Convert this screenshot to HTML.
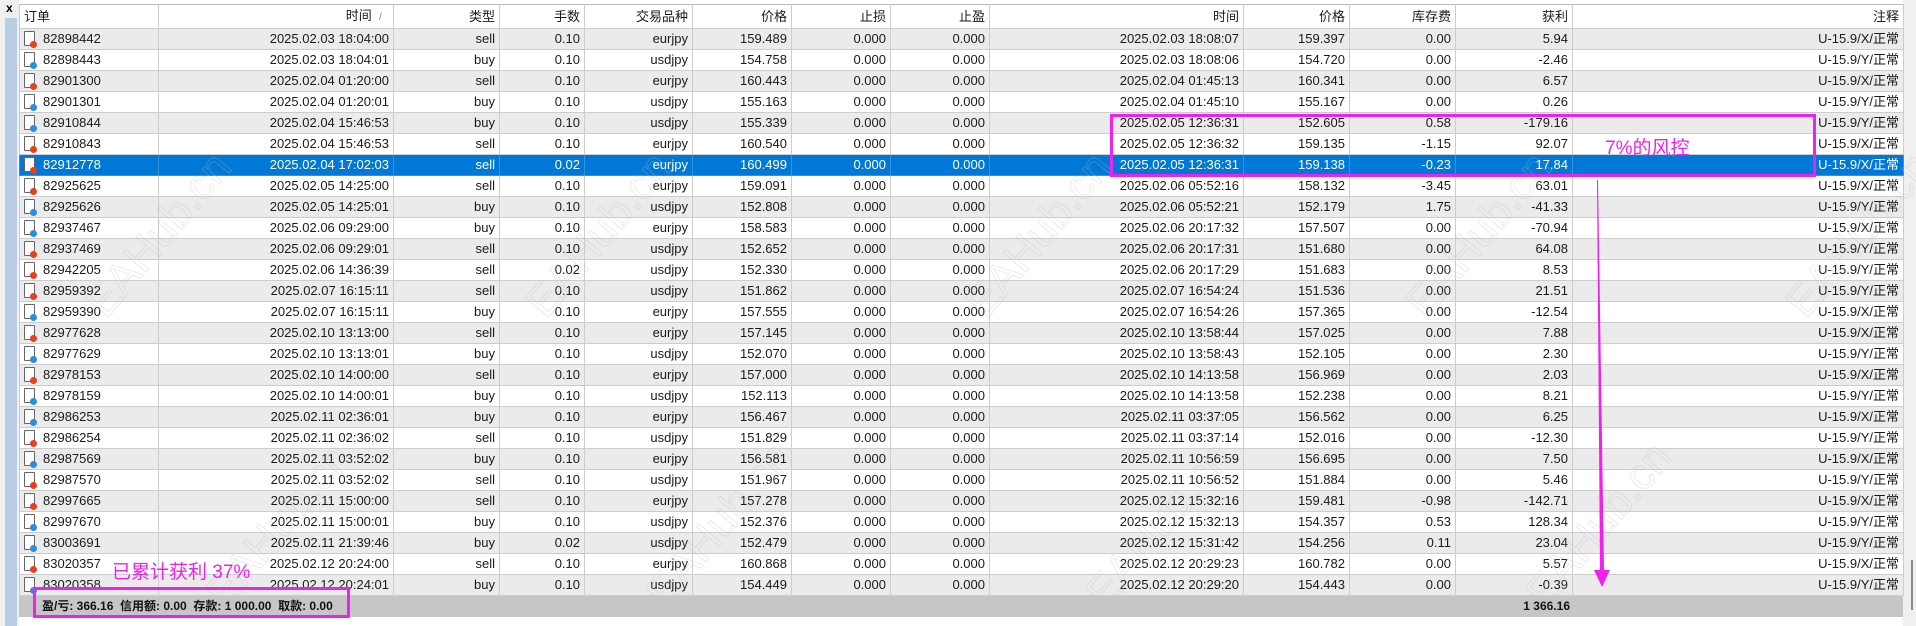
<!DOCTYPE html>
<html><head><meta charset="utf-8"><style>
html,body{margin:0;padding:0;width:1916px;height:626px;overflow:hidden;background:#fff;font-family:"Liberation Sans","Noto Sans CJK SC",sans-serif;}
.strip{position:absolute;left:0;top:0;width:19px;height:626px;background:#f0f0f0;}
.strip i{position:absolute;left:5px;top:18px;width:12px;height:608px;background:#b9cde5;}
.strip b{position:absolute;left:6px;top:1px;font-size:12px;font-weight:bold;color:#000;}
.sb{position:absolute;left:1903px;top:0;width:13px;height:626px;background:#f0f0f0;}
.sb i{position:absolute;left:8px;top:560px;width:2px;height:50px;background:#888;}
table{position:absolute;left:19px;top:4px;border-collapse:collapse;table-layout:fixed;font-size:13px;color:#1a1a1a;}
td,th{border:1px solid #cdcdcd;padding:0 4px 0 0;white-space:nowrap;overflow:hidden;text-align:right;height:20px;line-height:20px;}
th{font-weight:normal;height:23px;background:#fff;border-top:1px solid #bbb;}
tr:nth-child(even) td{background:#ebebeb;}
tr.sel td{background:#0078d7;color:#fff;border-color:#3a8fd9;}
td.o,th.o{text-align:left;padding-left:4px;}
.ic{display:inline-block;position:relative;width:9px;height:13px;border:1px solid #666;border-radius:1px;background:#fff;vertical-align:middle;margin:-3px 8px 0 0;}
.ic:after{content:"";position:absolute;right:-3px;bottom:-3px;width:7px;height:7px;border-radius:50%;}
.s:after{background:#e8401c;}
.b:after{background:#2a8ee0;}
.foot{position:absolute;left:19px;top:596px;width:1884px;height:21px;background:#c6c6c6;font-size:12px;font-weight:bold;line-height:21px;color:#111;}
.ann{position:absolute;color:#f020f0;font-size:19px;}
.box{position:absolute;border:3px solid #f020f0;box-sizing:border-box;}
.wm{position:absolute;font-size:44px;color:transparent;-webkit-text-stroke:1px rgba(190,190,190,0.3);transform:rotate(-50deg);font-family:"Liberation Sans",sans-serif;}
</style></head><body>
<div class="strip"><i></i><b>x</b></div>
<div class="sb"><i></i></div>
<table>
<colgroup><col style="width:139px"><col style="width:235px"><col style="width:106px"><col style="width:85px"><col style="width:108px"><col style="width:99px"><col style="width:99px"><col style="width:99px"><col style="width:254px"><col style="width:106px"><col style="width:106px"><col style="width:117px"><col style="width:331px"></colgroup>
<tr><th class="o">订单</th><th>时间 &nbsp;<span style="font-size:10px;color:#888">/</span>&nbsp;&nbsp;</th><th>类型</th><th>手数</th><th>交易品种</th><th>价格</th><th>止损</th><th>止盈</th><th>时间</th><th>价格</th><th>库存费</th><th>获利</th><th>注释</th></tr>
<tr><td class="o"><span class="ic s"></span>82898442</td><td>2025.02.03 18:04:00</td><td>sell</td><td>0.10</td><td>eurjpy</td><td>159.489</td><td>0.000</td><td>0.000</td><td>2025.02.03 18:08:07</td><td>159.397</td><td>0.00</td><td>5.94</td><td>U-15.9/X/正常</td></tr>
<tr><td class="o"><span class="ic b"></span>82898443</td><td>2025.02.03 18:04:01</td><td>buy</td><td>0.10</td><td>usdjpy</td><td>154.758</td><td>0.000</td><td>0.000</td><td>2025.02.03 18:08:06</td><td>154.720</td><td>0.00</td><td>-2.46</td><td>U-15.9/Y/正常</td></tr>
<tr><td class="o"><span class="ic s"></span>82901300</td><td>2025.02.04 01:20:00</td><td>sell</td><td>0.10</td><td>eurjpy</td><td>160.443</td><td>0.000</td><td>0.000</td><td>2025.02.04 01:45:13</td><td>160.341</td><td>0.00</td><td>6.57</td><td>U-15.9/X/正常</td></tr>
<tr><td class="o"><span class="ic b"></span>82901301</td><td>2025.02.04 01:20:01</td><td>buy</td><td>0.10</td><td>usdjpy</td><td>155.163</td><td>0.000</td><td>0.000</td><td>2025.02.04 01:45:10</td><td>155.167</td><td>0.00</td><td>0.26</td><td>U-15.9/Y/正常</td></tr>
<tr><td class="o"><span class="ic b"></span>82910844</td><td>2025.02.04 15:46:53</td><td>buy</td><td>0.10</td><td>usdjpy</td><td>155.339</td><td>0.000</td><td>0.000</td><td>2025.02.05 12:36:31</td><td>152.605</td><td>0.58</td><td>-179.16</td><td>U-15.9/Y/正常</td></tr>
<tr><td class="o"><span class="ic s"></span>82910843</td><td>2025.02.04 15:46:53</td><td>sell</td><td>0.10</td><td>eurjpy</td><td>160.540</td><td>0.000</td><td>0.000</td><td>2025.02.05 12:36:32</td><td>159.135</td><td>-1.15</td><td>92.07</td><td>U-15.9/X/正常</td></tr>
<tr class="sel"><td class="o"><span class="ic s"></span>82912778</td><td>2025.02.04 17:02:03</td><td>sell</td><td>0.02</td><td>eurjpy</td><td>160.499</td><td>0.000</td><td>0.000</td><td>2025.02.05 12:36:31</td><td>159.138</td><td>-0.23</td><td>17.84</td><td>U-15.9/X/正常</td></tr>
<tr><td class="o"><span class="ic s"></span>82925625</td><td>2025.02.05 14:25:00</td><td>sell</td><td>0.10</td><td>eurjpy</td><td>159.091</td><td>0.000</td><td>0.000</td><td>2025.02.06 05:52:16</td><td>158.132</td><td>-3.45</td><td>63.01</td><td>U-15.9/X/正常</td></tr>
<tr><td class="o"><span class="ic b"></span>82925626</td><td>2025.02.05 14:25:01</td><td>buy</td><td>0.10</td><td>usdjpy</td><td>152.808</td><td>0.000</td><td>0.000</td><td>2025.02.06 05:52:21</td><td>152.179</td><td>1.75</td><td>-41.33</td><td>U-15.9/Y/正常</td></tr>
<tr><td class="o"><span class="ic b"></span>82937467</td><td>2025.02.06 09:29:00</td><td>buy</td><td>0.10</td><td>eurjpy</td><td>158.583</td><td>0.000</td><td>0.000</td><td>2025.02.06 20:17:32</td><td>157.507</td><td>0.00</td><td>-70.94</td><td>U-15.9/X/正常</td></tr>
<tr><td class="o"><span class="ic s"></span>82937469</td><td>2025.02.06 09:29:01</td><td>sell</td><td>0.10</td><td>usdjpy</td><td>152.652</td><td>0.000</td><td>0.000</td><td>2025.02.06 20:17:31</td><td>151.680</td><td>0.00</td><td>64.08</td><td>U-15.9/Y/正常</td></tr>
<tr><td class="o"><span class="ic s"></span>82942205</td><td>2025.02.06 14:36:39</td><td>sell</td><td>0.02</td><td>usdjpy</td><td>152.330</td><td>0.000</td><td>0.000</td><td>2025.02.06 20:17:29</td><td>151.683</td><td>0.00</td><td>8.53</td><td>U-15.9/Y/正常</td></tr>
<tr><td class="o"><span class="ic s"></span>82959392</td><td>2025.02.07 16:15:11</td><td>sell</td><td>0.10</td><td>usdjpy</td><td>151.862</td><td>0.000</td><td>0.000</td><td>2025.02.07 16:54:24</td><td>151.536</td><td>0.00</td><td>21.51</td><td>U-15.9/Y/正常</td></tr>
<tr><td class="o"><span class="ic b"></span>82959390</td><td>2025.02.07 16:15:11</td><td>buy</td><td>0.10</td><td>eurjpy</td><td>157.555</td><td>0.000</td><td>0.000</td><td>2025.02.07 16:54:26</td><td>157.365</td><td>0.00</td><td>-12.54</td><td>U-15.9/X/正常</td></tr>
<tr><td class="o"><span class="ic s"></span>82977628</td><td>2025.02.10 13:13:00</td><td>sell</td><td>0.10</td><td>eurjpy</td><td>157.145</td><td>0.000</td><td>0.000</td><td>2025.02.10 13:58:44</td><td>157.025</td><td>0.00</td><td>7.88</td><td>U-15.9/X/正常</td></tr>
<tr><td class="o"><span class="ic b"></span>82977629</td><td>2025.02.10 13:13:01</td><td>buy</td><td>0.10</td><td>usdjpy</td><td>152.070</td><td>0.000</td><td>0.000</td><td>2025.02.10 13:58:43</td><td>152.105</td><td>0.00</td><td>2.30</td><td>U-15.9/Y/正常</td></tr>
<tr><td class="o"><span class="ic s"></span>82978153</td><td>2025.02.10 14:00:00</td><td>sell</td><td>0.10</td><td>eurjpy</td><td>157.000</td><td>0.000</td><td>0.000</td><td>2025.02.10 14:13:58</td><td>156.969</td><td>0.00</td><td>2.03</td><td>U-15.9/X/正常</td></tr>
<tr><td class="o"><span class="ic b"></span>82978159</td><td>2025.02.10 14:00:01</td><td>buy</td><td>0.10</td><td>usdjpy</td><td>152.113</td><td>0.000</td><td>0.000</td><td>2025.02.10 14:13:58</td><td>152.238</td><td>0.00</td><td>8.21</td><td>U-15.9/Y/正常</td></tr>
<tr><td class="o"><span class="ic b"></span>82986253</td><td>2025.02.11 02:36:01</td><td>buy</td><td>0.10</td><td>eurjpy</td><td>156.467</td><td>0.000</td><td>0.000</td><td>2025.02.11 03:37:05</td><td>156.562</td><td>0.00</td><td>6.25</td><td>U-15.9/X/正常</td></tr>
<tr><td class="o"><span class="ic s"></span>82986254</td><td>2025.02.11 02:36:02</td><td>sell</td><td>0.10</td><td>usdjpy</td><td>151.829</td><td>0.000</td><td>0.000</td><td>2025.02.11 03:37:14</td><td>152.016</td><td>0.00</td><td>-12.30</td><td>U-15.9/Y/正常</td></tr>
<tr><td class="o"><span class="ic b"></span>82987569</td><td>2025.02.11 03:52:02</td><td>buy</td><td>0.10</td><td>eurjpy</td><td>156.581</td><td>0.000</td><td>0.000</td><td>2025.02.11 10:56:59</td><td>156.695</td><td>0.00</td><td>7.50</td><td>U-15.9/X/正常</td></tr>
<tr><td class="o"><span class="ic s"></span>82987570</td><td>2025.02.11 03:52:02</td><td>sell</td><td>0.10</td><td>usdjpy</td><td>151.967</td><td>0.000</td><td>0.000</td><td>2025.02.11 10:56:52</td><td>151.884</td><td>0.00</td><td>5.46</td><td>U-15.9/Y/正常</td></tr>
<tr><td class="o"><span class="ic s"></span>82997665</td><td>2025.02.11 15:00:00</td><td>sell</td><td>0.10</td><td>eurjpy</td><td>157.278</td><td>0.000</td><td>0.000</td><td>2025.02.12 15:32:16</td><td>159.481</td><td>-0.98</td><td>-142.71</td><td>U-15.9/X/正常</td></tr>
<tr><td class="o"><span class="ic b"></span>82997670</td><td>2025.02.11 15:00:01</td><td>buy</td><td>0.10</td><td>usdjpy</td><td>152.376</td><td>0.000</td><td>0.000</td><td>2025.02.12 15:32:13</td><td>154.357</td><td>0.53</td><td>128.34</td><td>U-15.9/Y/正常</td></tr>
<tr><td class="o"><span class="ic b"></span>83003691</td><td>2025.02.11 21:39:46</td><td>buy</td><td>0.02</td><td>usdjpy</td><td>152.479</td><td>0.000</td><td>0.000</td><td>2025.02.12 15:31:42</td><td>154.256</td><td>0.11</td><td>23.04</td><td>U-15.9/Y/正常</td></tr>
<tr><td class="o"><span class="ic s"></span>83020357</td><td>2025.02.12 20:24:00</td><td>sell</td><td>0.10</td><td>eurjpy</td><td>160.868</td><td>0.000</td><td>0.000</td><td>2025.02.12 20:29:23</td><td>160.782</td><td>0.00</td><td>5.57</td><td>U-15.9/X/正常</td></tr>
<tr><td class="o"><span class="ic b"></span>83020358</td><td>2025.02.12 20:24:01</td><td>buy</td><td>0.10</td><td>usdjpy</td><td>154.449</td><td>0.000</td><td>0.000</td><td>2025.02.12 20:29:20</td><td>154.443</td><td>0.00</td><td>-0.39</td><td>U-15.9/Y/正常</td></tr>
</table>
<div class="foot"><span style="position:absolute;left:23px;">盈/亏: 366.16 &nbsp;信用额: 0.00 &nbsp;存款: 1 000.00 &nbsp;取款: 0.00</span><span style="position:absolute;right:333px;">1 366.16</span></div>
<div class="wm" style="left:60px;top:210px">EAHub.cn</div>
<div class="wm" style="left:500px;top:210px">EAHub.cn</div>
<div class="wm" style="left:940px;top:210px">EAHub.cn</div>
<div class="wm" style="left:1380px;top:210px">EAHub.cn</div>
<div class="wm" style="left:1760px;top:210px">EAHub.cn</div>
<div class="wm" style="left:180px;top:500px">EAHub.cn</div>
<div class="wm" style="left:620px;top:500px">EAHub.cn</div>
<div class="wm" style="left:1060px;top:500px">EAHub.cn</div>
<div class="wm" style="left:1500px;top:500px">EAHub.cn</div>
<div class="box" style="left:1110px;top:114px;width:706px;height:63px"></div>
<div class="ann" style="left:1605px;top:133px">7%的风控</div>
<div class="box" style="left:33px;top:587px;width:317px;height:31px"></div>
<div class="ann" style="left:112px;top:557px">已累计获利 37%</div>
<svg style="position:absolute;left:0;top:0" width="1916" height="626"><polygon points="1597,180 1598,180 1604,570 1610,570 1602,587 1594,570 1600,570" fill="#f020f0"/></svg>
</body></html>
